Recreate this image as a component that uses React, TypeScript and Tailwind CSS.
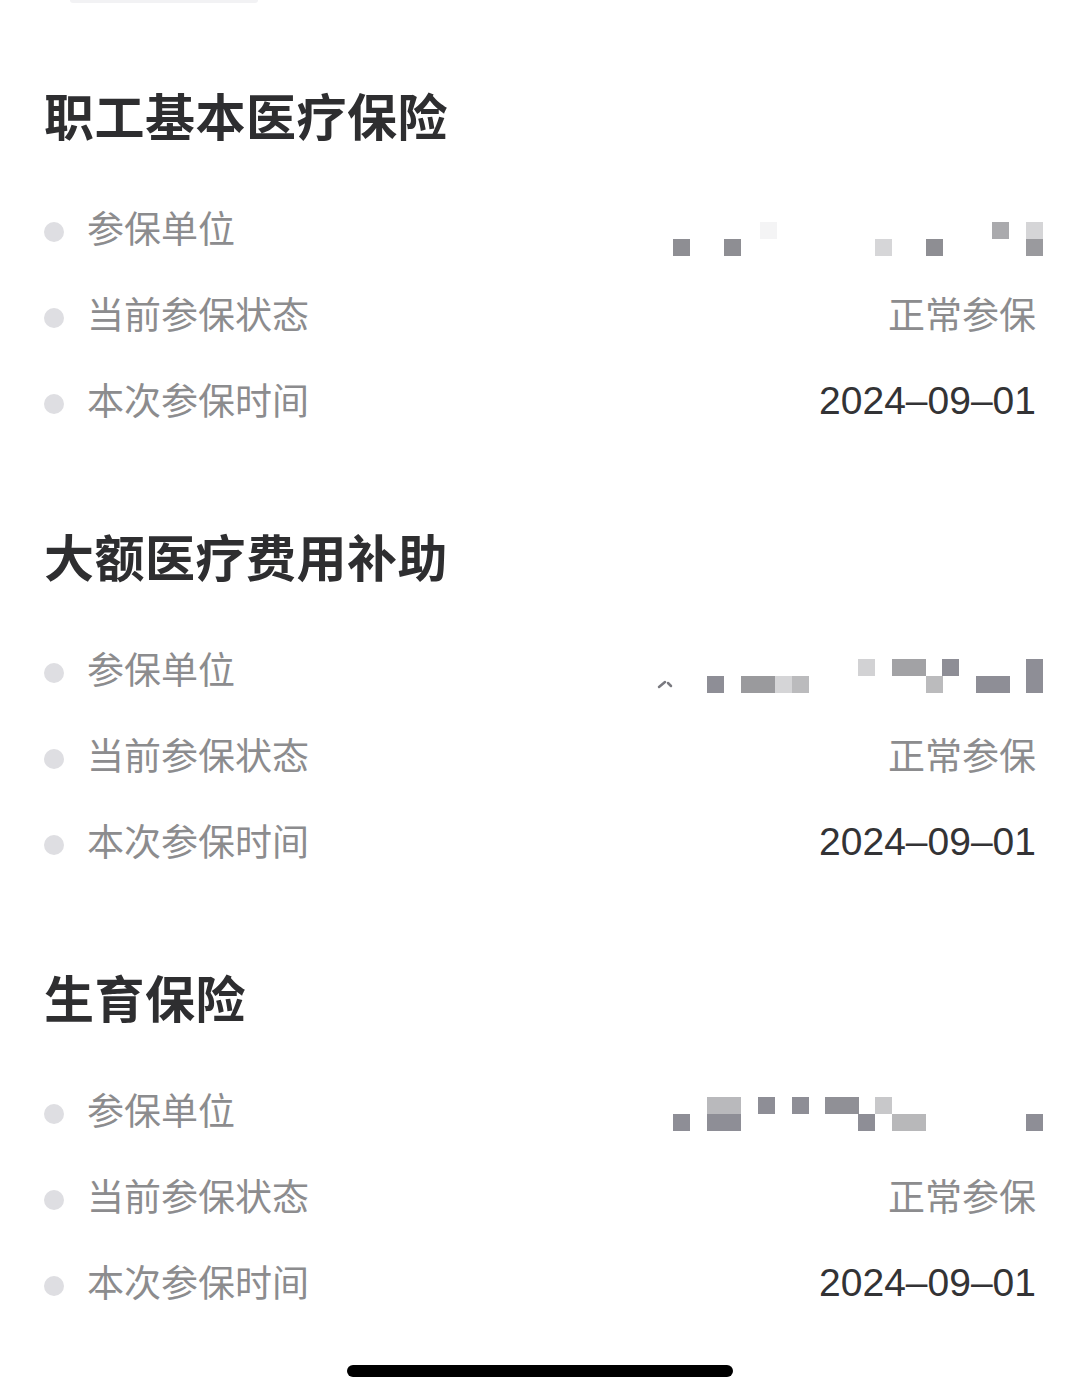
import React from 'react';

type Block = [number, number, number, number, string];

// mosaic blocks: x, y, w, h (row-relative, svg origin at x=655), colour
const mosaics: Block[][] = [
  [
    [105, 35, 17, 17, '#f4f4f5'],
    [337, 35, 17, 17, '#aaaaad'],
    [371, 35, 17, 17, '#d5d5d7'],
    [18, 52, 17, 17, '#8e8e93'],
    [69, 52, 17, 17, '#8e8e93'],
    [220, 52, 17, 17, '#d6d6d8'],
    [271, 52, 17, 17, '#8e8e93'],
    [371, 52, 17, 17, '#9a9a9e'],
  ],
  [
    [203, 31, 17, 17, '#d2d2d4'],
    [237, 31, 34, 17, '#a2a2a5'],
    [287, 31, 17, 17, '#8e8e96'],
    [371, 31, 17, 34, '#8e8e96'],
    [52, 48, 17, 17, '#8e8e96'],
    [86, 48, 34, 17, '#9a9a9d'],
    [120, 48, 17, 17, '#d5d5d7'],
    [137, 48, 17, 17, '#bbbbbd'],
    [271, 48, 17, 17, '#bbbbbd'],
    [321, 48, 34, 17, '#8e8e96'],
  ],
  [
    [52, 28, 34, 17, '#b9b9bc'],
    [103, 28, 17, 17, '#8e8e96'],
    [137, 28, 17, 17, '#8e8e96'],
    [170, 28, 34, 17, '#909096'],
    [220, 28, 17, 17, '#c8c8ca'],
    [18, 45, 17, 17, '#8e8e96'],
    [52, 45, 34, 17, '#8e8e96'],
    [203, 45, 17, 17, '#8e8e96'],
    [237, 45, 34, 17, '#b8b8ba'],
    [371, 45, 17, 17, '#8e8e96'],
  ],
];

const sections = ['职工基本医疗保险', '大额医疗费用补助', '生育保险'];

function Dot() {
  return <span className="w-5 h-5 mt-[4px] rounded-full bg-[#dedee2] shrink-0" />;
}

function Row({ label, children }: { label: string; children: React.ReactNode }) {
  return (
    <div className="h-[86px] flex items-center justify-between">
      <div className="flex items-center gap-[23px]">
        <Dot />
        <span className="text-[37px] text-[#8c8c8e] leading-none pb-[6px]">{label}</span>
      </div>
      {children}
    </div>
  );
}

export default function App() {
  return (
    <div
      className="w-[1080px] h-[1386px] bg-white relative overflow-hidden"
      style={{ fontFamily: '"Noto Sans CJK SC", "Noto Sans", sans-serif' }}
    >
      <div className="ml-[70px] w-[188px] h-[3px] bg-[#f2f2f4] rounded-b-sm" />
      <div className="px-[44px] pt-[81px] flex flex-col gap-[80px]">
        {sections.map((title, i) => (
          <div key={i}>
            <h2 className="text-[50px] font-bold leading-[60px] text-[#2e2e30] mb-[43px] tracking-[0.5px]">{title}</h2>
            <Row label="参保单位">
              <svg width="388" height="86" viewBox="0 0 388 86" className="mr-[-7px]">
                {i === 1 && (
                  <path d="M4 59 L10 54 M13 55 L16 58" stroke="#7a7a80" strokeWidth="2.5" strokeLinecap="round" fill="none" />
                )}
                {mosaics[i].map(([x, y, w, h, c], j) => (
                  <rect key={j} x={x} y={y} width={w} height={h} fill={c} />
                ))}
              </svg>
            </Row>
            <Row label="当前参保状态">
              <span className="text-[37px] text-[#8c8c8e] leading-none pb-[6px]">正常参保</span>
            </Row>
            <Row label="本次参保时间">
              <span
                className="text-[39px] text-[#333335] leading-none pb-[4px]"
                style={{ fontFamily: '"Liberation Sans", Arial, sans-serif' }}
              >
                2024–09–01
              </span>
            </Row>
          </div>
        ))}
      </div>
      <div className="absolute left-[347px] top-[1365px] w-[386px] h-[12px] rounded-full bg-black" />
    </div>
  );
}
